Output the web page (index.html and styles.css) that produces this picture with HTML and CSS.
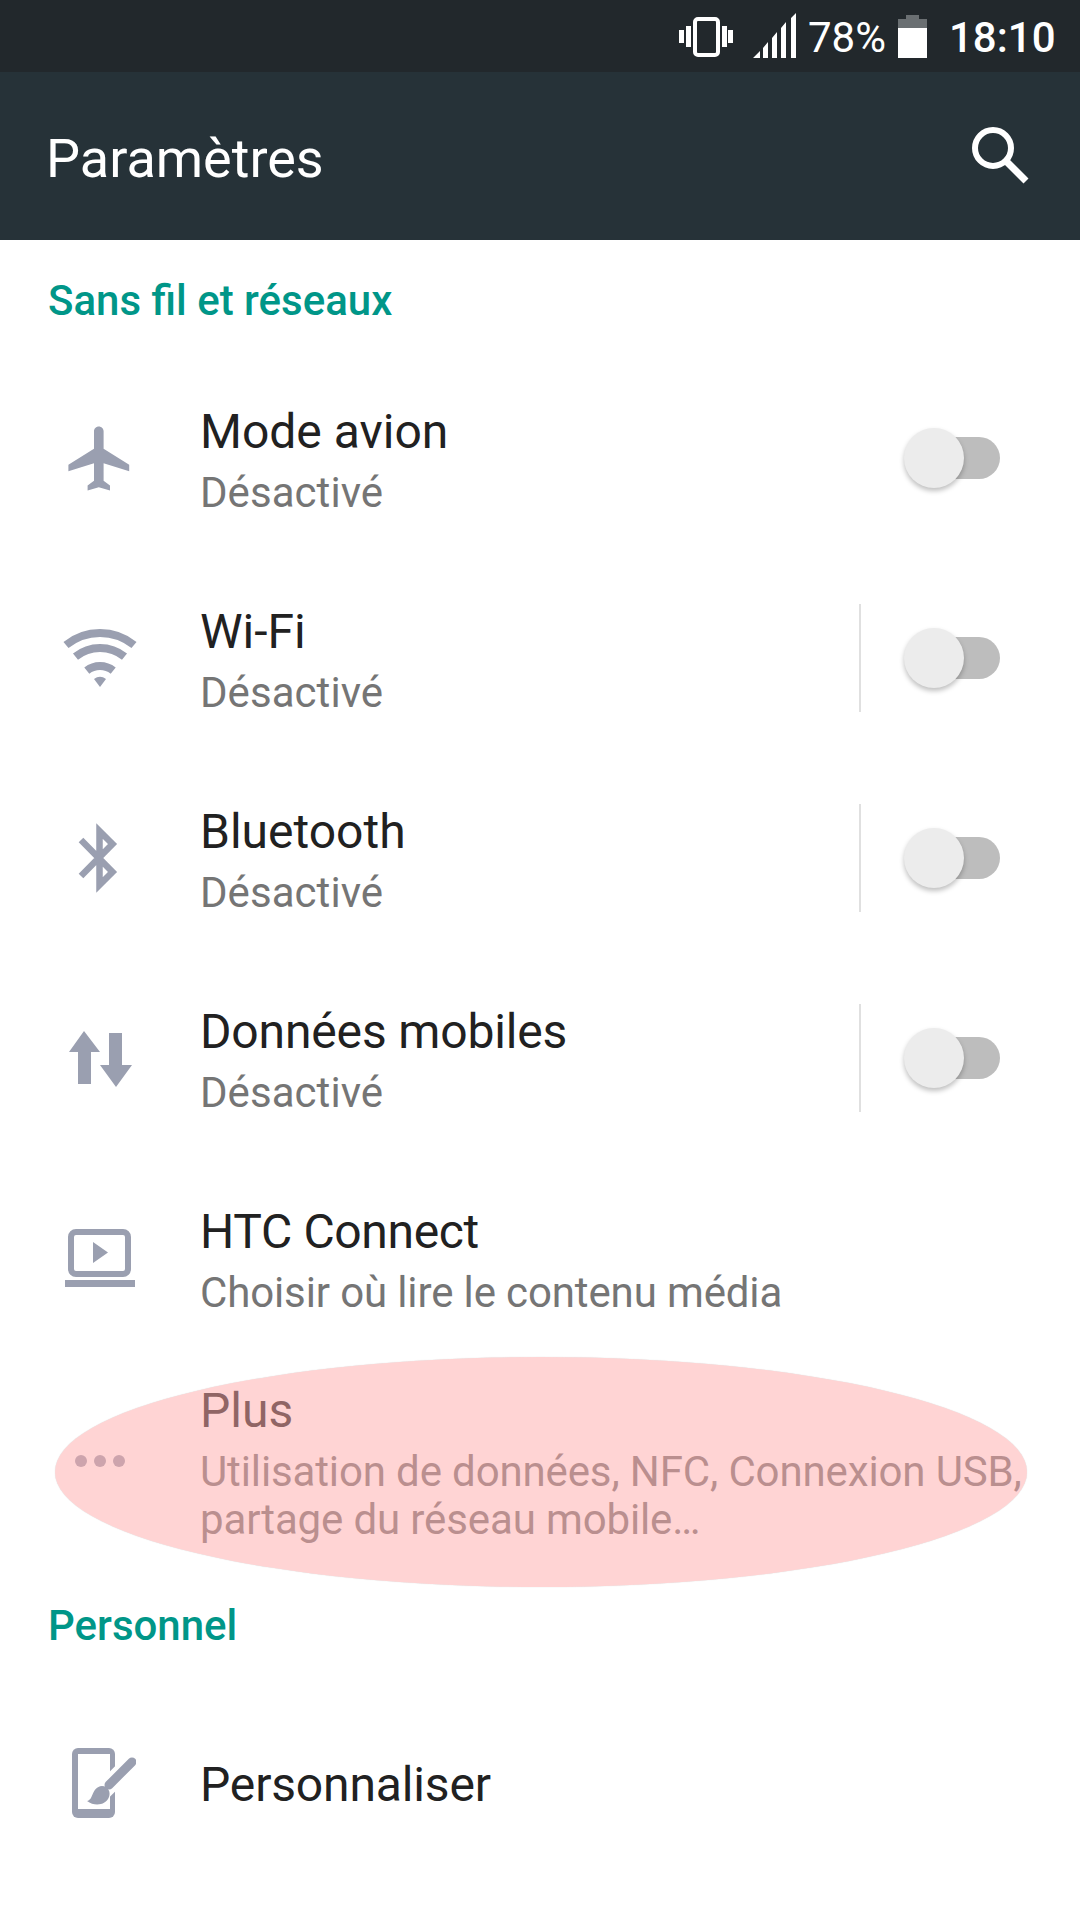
FILE: index.html
```html
<!DOCTYPE html>
<html lang="fr">
<head>
<meta charset="utf-8">
<title>Paramètres</title>
<link rel="stylesheet" href="styles.css">
</head>
<body>
<div class="screen">
  <div class="statusbar">
    <svg class="st-vibrate" width="54" height="40" viewBox="0 0 54 40"><rect x="16" y="2" width="23" height="36" rx="3" fill="none" stroke="#fff" stroke-width="4"/><rect x="0" y="13" width="5" height="13" fill="#fff"/><rect x="7" y="9" width="5" height="21" fill="#fff"/><rect x="43" y="9" width="5" height="21" fill="#fff"/><rect x="49" y="13" width="5" height="13" fill="#fff"/></svg>
    <svg class="st-signal" width="43" height="45" viewBox="0 0 43 45"><path d="M0 45 7 38V45ZM10 35 15 29V45H10ZM19 25 24 19V45H19ZM28 15 33 9V45H28ZM38 5 43 0V45H38Z" fill="#fff"/></svg>
    <span class="st-pct">78%</span>
    <svg class="st-battery" width="29" height="43" viewBox="0 0 29 43"><path d="M8 0H21V4H29V14H0V4H8Z" fill="#6a6f72"/><rect y="13" width="29" height="30" fill="#fff"/></svg>
    <span class="st-time">18:10</span>
  </div>
  <header class="appbar">
    <h1 class="appbar-title">Paramètres</h1>
    <svg class="appbar-search" width="58" height="58" viewBox="0 0 58 58"><circle cx="21" cy="21" r="18" fill="none" stroke="#fff" stroke-width="6"/><path d="M34 34 54 54" stroke="#fff" stroke-width="7" fill="none"/></svg>
  </header>

  <main class="list">
    <h2 class="section">Sans fil et réseaux</h2>

    <div class="row">
      <div class="ico"><svg width="76.8" height="76.8" viewBox="0 0 24 24"><path class="fill" d="M21 16v-2l-8-5V3.500c0-.83-.67-1.500-1.500-1.500S10 2.670 10 3.500V9l-8 5v2l8-2.500V19l-2 1.500V22l3.500-1 3.500 1v-1.500L13 19v-5.500l8 2.500z"/></svg></div>
      <div class="txt"><div class="ttl">Mode avion</div><div class="sub">Désactivé</div></div>
      <div class="sw"><span class="sw-track"></span><span class="sw-thumb"></span></div>
    </div>

    <div class="row">
      <div class="ico"><svg width="80" height="64" viewBox="0 0 80 64"><g class="line" stroke-width="8"><path d="M6 19A54 54 0 0 1 74 19"/><path d="M15.500 30.700A39 39 0 0 1 64.500 30.700"/><path d="M26.800 44.700A21 21 0 0 1 53.200 44.700"/></g><path class="fill" d="M40 61 46 53A10 10 0 0 0 34 53Z"/></svg></div>
      <div class="txt"><div class="ttl">Wi-Fi</div><div class="sub">Désactivé</div></div>
      <span class="divider"></span>
      <div class="sw"><span class="sw-track"></span><span class="sw-thumb"></span></div>
    </div>

    <div class="row">
      <div class="ico"><svg width="72" height="72" viewBox="0 0 72 72"><path class="line" stroke-width="6.500" d="M17 18 48.500 50 35.500 63V9L48.500 22 17 54"/></svg></div>
      <div class="txt"><div class="ttl">Bluetooth</div><div class="sub">Désactivé</div></div>
      <span class="divider"></span>
      <div class="sw"><span class="sw-track"></span><span class="sw-thumb"></span></div>
    </div>

    <div class="row">
      <div class="ico"><svg width="72" height="64" viewBox="0 0 72 64"><path class="fill" d="M20 5 36 26H27V58H14V26H5ZM45 7H58V39H68L52 61 36 39H45Z"/></svg></div>
      <div class="txt"><div class="ttl ttl-tight">Données mobiles</div><div class="sub">Désactivé</div></div>
      <span class="divider"></span>
      <div class="sw"><span class="sw-track"></span><span class="sw-thumb"></span></div>
    </div>

    <div class="row">
      <div class="ico"><svg width="72" height="60" viewBox="0 0 72 60"><rect x="7" y="4" width="57" height="42" rx="5" fill="none" stroke="#9a9fb0" stroke-width="6"/><path class="fill" d="M29 14 44 24.500 29 35ZM1 52H71V59H1Z"/></svg></div>
      <div class="txt"><div class="ttl ttl-tighter">HTC Connect</div><div class="sub sub-tight">Choisir où lire le contenu média</div></div>
    </div>

    <div class="row row-tall">
      <div class="ico ico-dots"><span class="dot"></span><span class="dot"></span><span class="dot"></span></div>
      <div class="txt txt-tall"><div class="ttl">Plus</div><div class="sub sub-tight">Utilisation de données, NFC, Connexion USB,<br>partage du réseau mobile…</div></div>
    </div>

    <h2 class="section section-2">Personnel</h2>

    <div class="row row-last">
      <div class="ico"><svg width="72" height="72" viewBox="0 0 72 72"><rect x="8" y="0" width="43" height="70" rx="6" fill="#9a9fb0"/><rect x="14" y="6" width="32" height="55" fill="#fff"/><path d="M72 10 30 52" stroke="#fff" stroke-width="18" fill="none"/><path d="M68 14 45 37" stroke="#9a9fb0" stroke-width="9" stroke-linecap="round" fill="none"/><path class="fill" d="M23 53C30 52 27 39 38 38C44 38 47 44 45 49C42 57 31 59 23 53Z"/></svg></div>
      <div class="txt"><div class="ttl ttl-tight">Personnaliser</div></div>
    </div>
  </main>
  <div class="highlight"></div>
</div>
</body>
</html>
```
FILE: styles.css
```css
* { box-sizing: border-box; }
html, body { margin: 0; padding: 0; background: #fff; }
.screen { position: relative; width: 1080px; height: 1920px; overflow: hidden; background: #fff; font-family: Roboto, "Liberation Sans", sans-serif; }

.statusbar { height: 72px; background: #22282c; display: flex; align-items: flex-start; color: #fff; padding-left: 679px; }
.st-vibrate { margin-top: 17px; }
.st-signal { margin-top: 13px; margin-left: 20px; }
.st-pct { font-size: 42px; line-height: 50px; margin-top: 13px; margin-left: 12px; width: 90px; }
.st-battery { margin-top: 15px; }
.st-time { font-size: 42px; line-height: 50px; margin-top: 13px; margin-left: 22px; font-weight: 500; }

.appbar { height: 168px; background: #263238; display: flex; align-items: center; justify-content: space-between; padding: 0 50px 0 46px; }
.appbar-title { margin: 4px 0 0; font-size: 54px; font-weight: 400; color: #fff; }
.appbar-search { flex: none; }

.list { display: flex; flex-direction: column; }
.section { margin: 0; height: 118px; padding: 36px 0 0 48px; font-size: 42px; line-height: 50px; font-weight: 500; color: #009688; }
.section-2 { height: 108px; padding-top: 11px; }

.row { height: 200px; display: flex; align-items: center; padding-left: 62px; padding-right: 80px; }
.row-tall { height: 232px; align-items: flex-start; padding-top: 22px; padding-right: 0; }
.row-last { height: 172px; }
.ico { width: 76px; flex: none; display: flex; align-items: center; justify-content: center; }
.ico svg { flex: none; }
.ico-dots { gap: 7px; margin-top: 75px; }
.dot { width: 12px; height: 12px; border-radius: 50%; background: #9a9fb0; flex: none; }
.fill { fill: #9a9fb0; }
.line { fill: none; stroke: #9a9fb0; }

.txt { margin-left: 62px; margin-top: 2px; flex: 1; min-width: 0; }
.txt-tall { margin-top: 0; white-space: nowrap; }
.ttl { font-size: 48px; line-height: 62px; color: #212121; }
.ttl-tight { letter-spacing: -.15px; }
.ttl-tighter { letter-spacing: -.33px; }
.sub { font-size: 42px; line-height: 48px; color: #757575; margin-top: 6px; letter-spacing: .05px; }
.sub-tight { letter-spacing: -.13px; }

.divider { width: 2px; height: 108px; background: #e0e0e0; margin-right: 43px; flex: none; }
.sw { position: relative; width: 96px; height: 60px; flex: none; }
.sw-track { position: absolute; right: 0; top: 9px; width: 90px; height: 42px; border-radius: 21px; background: #bdbdbd; }
.sw-thumb { position: absolute; left: 0; top: 0; width: 60px; height: 60px; border-radius: 50%; background: #ececec; box-shadow: 0 3px 5px rgba(0,0,0,.25); }

.highlight { position: absolute; left: 55px; top: 1357px; width: 972px; height: 230px; border-radius: 50%; background: rgba(255, 169, 169, .5); box-shadow: 0 0 1px rgba(0,0,0,.2); }
```
